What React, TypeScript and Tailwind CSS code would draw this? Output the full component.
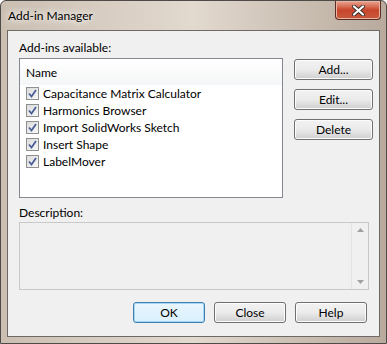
import React from "react";

const items = [
  "Capacitance Matrix Calculator",
  "Harmonics Browser",
  "Import SolidWorks Sketch",
  "Insert Shape",
  "LabelMover",
];

function CheckBox() {
  return (
    <span className="flex h-[13px] w-[13px] shrink-0 items-center justify-center border border-[#8e8f8f] bg-gradient-to-br from-[#dcdcdc] to-[#f8f8f8]">
      <svg width="9" height="9" viewBox="0 0 9 9">
        <path d="M1 4.5 L3.5 7.5 L8 1" fill="none" stroke="#4a5f97" strokeWidth="1.8" />
      </svg>
    </span>
  );
}

function WinButton({ label, focused }: { label: string; focused?: boolean }) {
  return (
    <button
      className={
        "flex h-[21px] w-full items-center justify-center rounded-[3px] border text-[12px] text-black " +
        (focused
          ? "border-[#3c7fb1] bg-gradient-to-b from-[#eaf6fd] to-[#d9f0fc] shadow-[inset_0_0_0_1px_#a6d8f5]"
          : "border-[#707070] bg-gradient-to-b from-[#f2f2f2] via-[#ebebeb] to-[#cfcfcf] shadow-[inset_0_0_0_1px_#fcfcfc]")
      }
    >
      {label}
    </button>
  );
}

export default function App() {
  return (
    <div
      className="relative h-[344px] w-[387px] overflow-hidden rounded-t-[6px] border border-[#4d4a47] bg-gradient-to-r from-[#cbbfb2] via-[#e2d9cf] to-[#b8aa9c]"
      style={{ fontFamily: 'Lato, "Noto Sans", Arial, sans-serif' }}
    >
      {/* title bar */}
      <div className="flex h-[29px] items-center justify-between pl-[7px]">
        <span className="text-[12px] text-black [text-shadow:0_0_6px_#ffffff,0_0_10px_#ffffff]">
          Add-in Manager
        </span>
        <div className="mr-[5px] mt-[-10px] flex h-[19px] w-[46px] items-center justify-center rounded-b-[4px] border border-t-0 border-[#5b2c22] bg-gradient-to-b from-[#e8a593] via-[#c8452b] to-[#c75a3d] shadow-[inset_0_0_0_1px_#e9b4a6]">
          <svg width="13" height="11" viewBox="0 0 13 11">
            <path d="M2 1.5 L11 9.5 M11 1.5 L2 9.5" stroke="#39302e" strokeWidth="4" strokeLinecap="round" />
            <path d="M2 1.5 L11 9.5 M11 1.5 L2 9.5" stroke="#ffffff" strokeWidth="2.2" strokeLinecap="round" />
          </svg>
        </div>
      </div>

      {/* client area */}
      <div className="mx-[6px] h-[307px] border border-[#6f6a66] bg-[#f0f0f0] pl-[11px] pr-[6px] pt-[9px] text-[12px] text-black">
        <div className="h-[18px] leading-[15px]">Add-ins available:</div>
        <div className="flex">
          <div className="h-[140px] w-[264px] shrink-0 border border-[#828790] bg-white">
            <div className="flex h-[26px] items-center bg-gradient-to-b from-white to-[#f5f6f7] pl-[6px] pt-[1px]">
              Name
            </div>
            <div className="flex flex-col">
              {items.map((it) => (
                <div key={it} className="flex h-[17px] items-center gap-[4px] pl-[6px]">
                  <CheckBox />
                  <span>{it}</span>
                </div>
              ))}
            </div>
          </div>
          <div className="ml-[11px] mt-[1px] flex w-[79px] shrink-0 flex-col gap-[9px]">
            <WinButton label="Add..." />
            <WinButton label="Edit..." />
            <WinButton label="Delete" />
          </div>
        </div>

        <div className="mt-[7px] h-[17px] leading-[15px]">Description:</div>
        <div className="flex h-[68px] w-[350px] border border-[#c9c9c9] bg-[#f0f0f0]">
          <div className="flex-1" />
          <div className="flex w-[17px] flex-col items-center justify-between border-l border-[#e3e3e3] py-[5px]">
            <svg width="7" height="4" viewBox="0 0 7 4">
              <path d="M0 4 L3.5 0 L7 4 Z" fill="#a0a0a0" />
            </svg>
            <svg width="7" height="4" viewBox="0 0 7 4">
              <path d="M0 0 L3.5 4 L7 0 Z" fill="#a0a0a0" />
            </svg>
          </div>
        </div>

        <div className="mt-[12px] flex justify-end gap-[9px] pr-[6px]">
          <div className="w-[72px]">
            <WinButton label="OK" focused />
          </div>
          <div className="w-[72px]">
            <WinButton label="Close" />
          </div>
          <div className="w-[72px]">
            <WinButton label="Help" />
          </div>
        </div>
      </div>
    </div>
  );
}
